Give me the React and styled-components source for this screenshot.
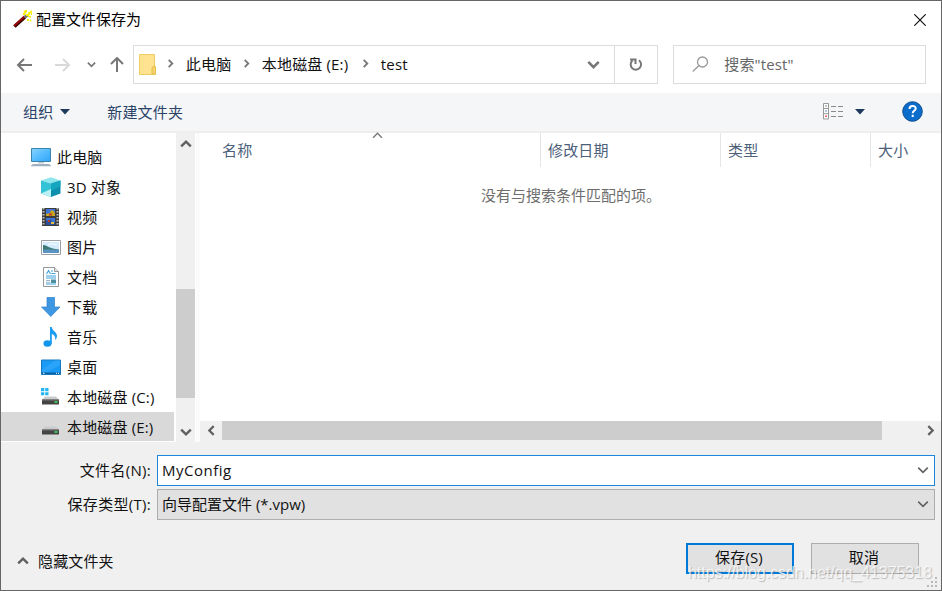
import React from 'react';
import styled, { createGlobalStyle } from 'styled-components';

const GlobalStyle = createGlobalStyle`
  * { box-sizing: border-box; }
  body { margin: 0; overflow: hidden; background: #fff; }
  button, input { font: inherit; color: inherit; letter-spacing: inherit; }
`;

const Window = styled.div`
  position: relative;
  display: flex;
  flex-direction: column;
  width: 942px;
  height: 591px;
  border: 1px solid #666;
  background: #fff;
  color: #111;
  font: 15px/20px 'Open Sans', 'Noto Sans CJK SC', sans-serif;
  letter-spacing: 0.15px;
  white-space: nowrap;
  overflow: hidden;
`;

const Icon = styled.svg`
  display: block;
  flex: none;
  width: ${(p) => p.$w}px;
  height: ${(p) => p.$h}px;
`;

const TitleBar = styled.header`
  display: flex;
  align-items: center;
  height: 37px;
  flex: none;
  padding: 0 15px 0 11px;
`;

const Title = styled.h1`
  flex: 1;
  margin: 0 0 0 4px;
  padding-bottom: 1px;
  font: inherit;
  letter-spacing: 0;
  color: #000;
`;

const NavBar = styled.nav`
  display: flex;
  align-items: center;
  height: 39px;
  flex: none;
  margin-top: 7px;
  padding: 0 15px 0 15px;
`;

const NavButtons = styled.div`
  display: flex;
  align-items: center;
  width: 117px;
`;

const NavGap = styled.span`
  width: ${(p) => p.$w}px;
`;

const AddressBar = styled.div`
  display: flex;
  align-items: center;
  width: 526px;
  height: 39px;
  border: 1px solid #dcdcdc;
  padding-left: 5px;
`;

const Crumb = styled.span`
  width: ${(p) => p.$w}px;
  padding-left: ${(p) => p.$pad || 0}px;
  padding-bottom: 2px;
`;

const AddressDrop = styled.div`
  display: flex;
  align-items: center;
  justify-content: center;
  align-self: stretch;
  width: 42px;
  margin-left: auto;
  border-right: 1px solid #dcdcdc;
`;

const Refresh = styled.div`
  display: flex;
  align-items: center;
  justify-content: center;
  width: 42px;
`;

const Search = styled.div`
  display: flex;
  align-items: center;
  width: 253px;
  height: 39px;
  margin-left: 15px;
  padding: 0 0 1px 18px;
  gap: 15px;
  border: 1px solid #dcdcdc;
  color: #666;
`;

const Toolbar = styled.div`
  display: flex;
  align-items: center;
  height: 40px;
  flex: none;
  margin-top: 9px;
  padding: 0 18px 1px 22px;
  border-bottom: 2px solid #eee;
  background: #f4f6f8;
  color: #2a4367;
`;

const ToolItem = styled.span`
  display: flex;
  align-items: center;
  gap: 7px;
  margin-right: ${(p) => p.$mr}px;
`;

const Spacer = styled.span`
  flex: 1;
`;

const Main = styled.main`
  display: flex;
  height: 309px;
  flex: none;
`;

const Tree = styled.ul`
  width: 173px;
  margin: 0;
  padding: 9px 0 0;
  list-style: none;
`;

const TreeRow = styled.li`
  display: flex;
  align-items: center;
  height: ${(p) => (p.$selected ? 29 : 30)}px;
  padding-left: ${(p) => (p.$root ? 29 : 39)}px;
  gap: 6px;
  background: ${(p) => (p.$selected ? '#d9d9d9' : 'transparent')};
`;

const VScroll = styled.div`
  display: flex;
  flex-direction: column;
  align-items: center;
  justify-content: space-between;
  width: 19px;
  margin-left: 2px;
  padding: 5px 0 4px;
  background: #f0f0f0;
`;

const VThumb = styled.span`
  width: 19px;
  height: 109px;
  margin-top: 111px;
  background: #cdcdcd;
`;

const ListPane = styled.section`
  flex: 1;
  display: flex;
  flex-direction: column;
  margin-left: 1px;
  border-left: 4px solid #fbfbfb;
`;

const Columns = styled.div`
  display: flex;
  height: 34px;
  color: #4c607a;
`;

const Column = styled.div`
  position: relative;
  display: flex;
  align-items: center;
  width: ${(p) => p.$w}px;
  padding-left: ${(p) => p.$pad}px;
  padding-bottom: 1px;
  border-right: ${(p) => (p.$last ? 'none' : '1px solid #e5e5e5')};
`;

const SortMark = styled.span`
  position: absolute;
  left: 172px;
  top: -3px;
`;

const Empty = styled.p`
  flex: 1;
  margin: 0;
  padding: 18px 0 0 281px;
  letter-spacing: 0;
  color: #6d6d6d;
`;

const HScroll = styled.div`
  display: flex;
  align-items: center;
  height: 21px;
  padding: 0 5px 2px 6px;
  background: #f0f0f0;
`;

const HThumb = styled.span`
  width: 660px;
  height: 19px;
  margin: 0 auto 0 5px;
  background: #cdcdcd;
`;

const Footer = styled.footer`
  flex: 1;
  padding: 13px 6px 0 0;
  background: #f0f0f0;
`;

const Field = styled.label`
  display: flex;
  align-items: center;
  height: 31px;
  margin-bottom: 3px;
`;

const FieldLabel = styled.span`
  width: 156px;
  padding: 0 6px 1px 0;
  text-align: right;
  letter-spacing: 0.3px;
`;

const FieldBox = styled.span`
  flex: 1;
  display: flex;
  align-items: center;
  justify-content: space-between;
  height: 31px;
  padding: 0 5px 2px 4px;
  border: 1px solid ${(p) => (p.$active ? '#1c86dc' : '#adadad')};
  background: ${(p) => (p.$active ? '#fff' : '#e1e1e1')};
  letter-spacing: ${(p) => (p.$active ? 0.5 : 0)}px;
`;

const Actions = styled.div`
  display: flex;
  align-items: center;
  height: 31px;
  margin-top: 23px;
  padding: 0 16px 0 16px;
`;

const HideFolders = styled.span`
  flex: 1;
  display: flex;
  align-items: center;
  gap: 9px;
  padding-top: 5px;
`;

const Button = styled.button`
  width: 108px;
  height: 31px;
  margin-left: ${(p) => (p.$primary ? 0 : 17)}px;
  padding: 0 2px 3px 0;
  border: ${(p) => (p.$primary ? '2px solid #0078d7' : '1px solid #adadad')};
  background: #e1e1e1;
`;

const Watermark = styled.span`
  position: absolute;
  left: 687px;
  top: 561px;
  font: 16px/22px 'Liberation Sans', sans-serif;
  letter-spacing: -0.05px;
  color: rgba(255, 255, 255, 0.75);
  text-shadow: 1px 1px 1px rgba(120, 120, 120, 0.45);
`;

const Grip = styled.span`
  position: absolute;
  right: 3px;
  bottom: 2px;
`;

const chevronPaths = {
  down: 'M1 3 L5 7 L9 3',
  up: 'M1 7 L5 3 L9 7',
  right: 'M3 1 L7 5 L3 9',
  left: 'M7 1 L3 5 L7 9',
};

const Chevron = ({ dir, size = 12, color = '#606060', weight = 2 }) => (
  <Icon $w={size} $h={size} viewBox="0 0 10 10" fill="none" stroke={color} strokeWidth={weight}>
    <path d={chevronPaths[dir]} />
  </Icon>
);

const Arrow = ({ rotate = 0, color = '#777' }) => (
  <Icon $w={18} $h={16} viewBox="0 0 18 16" fill="none" stroke={color} strokeWidth="2">
    <g transform={`rotate(${rotate} 9 8)`}>
      <path d="M16 8H2.5M8 2 2 8l6 6" />
    </g>
  </Icon>
);

const Caret = () => (
  <Icon $w={10} $h={6} viewBox="0 0 10 6">
    <path d="M0 0h10L5 5.5z" fill="#1e395b" />
  </Icon>
);

const Wand = () => (
  <Icon $w={20} $h={20} viewBox="0 0 20 20">
    <path d="M2.5 16.5 13 7" stroke="#300" strokeWidth="3.4" />
    <path d="M2 16 12.5 6.5" stroke="#a00808" strokeWidth="1.8" />
    <path d="M12.5 7.5l3-2.5" stroke="#777" strokeWidth="3" />
    <path
      d="M14 5h3M17 2v3M12 1l2 2M19 7l-3-1M20 1l-2 2M16 9v2M11 4h2M18 10l1 1M14 0v2M20 4h-1"
      stroke="#f8f000"
      strokeWidth="1.8"
    />
  </Icon>
);

const Folder = () => (
  <Icon $w={17} $h={21} viewBox="0 0 17 21">
    <path d="M.5.5h15v12h1v8h-16z" fill="#ffe390" stroke="#efcc62" />
    <path d="M13 20v-6l1.500-2 2 1v7z" fill="#f6d36c" stroke="#e5bd4d" />
  </Icon>
);

const PcIcon = () => (
  <Icon $w={21} $h={20} viewBox="0 0 21 20">
    <defs>
      <linearGradient id="screen" x1="0" y1="0" x2="1" y2="1">
        <stop offset="0" stopColor="#8bd4ff" />
        <stop offset=".5" stopColor="#55bcff" />
        <stop offset="1" stopColor="#2fa5f7" />
      </linearGradient>
    </defs>
    <path d="M1.500 1.500h19v13h-19z" fill="url(#screen)" stroke="#3b85ad" />
    <path d="M8 15h6v1.500H8z" fill="#c4ccd2" />
    <path d="M1 18.500 3 17h16l2 1.500v.8H1z" fill="#9fb0c2" />
  </Icon>
);

const CubeIcon = () => (
  <Icon $w={21} $h={20} viewBox="0 0 21 20">
    <path d="M1 3.500 11 .3l9.500 3.200L11 6.500z" fill="#8ee6ee" />
    <path d="M1 3.500 11 6.500V20L1 16.500z" fill="#34c3d6" />
    <path d="M1 16.500 11 12v8z" fill="#b9f1f4" />
    <path d="M11 6.500l9.500-3v13L11 20z" fill="#0d8fae" />
    <path d="M11 6.500l9.500-3V9L11 14z" fill="#15a6c0" />
  </Icon>
);

const VideoIcon = () => (
  <Icon $w={21} $h={20} viewBox="0 0 21 20">
    <path d="M2 1h17v18H2z" fill="#3c3c3c" />
    <path d="M3.500 1v18M17.500 1v18" stroke="#bbb" strokeWidth="2" strokeDasharray="1.500 1.500" />
    <path d="M6 2h9v7H6zM6 11h9v7H6z" fill="#3f74d8" />
    <path d="M6 7l4-1 1-3 3 1 1 3v2H6z" fill="#c9a51f" />
    <path d="M6 13l3 1 2-2 1 3 3 1v2H6z" fill="#2c4f9c" />
    <path d="M9 6.500h3v2H9zM8 13h2v2H8z" fill="#c33b23" />
    <path d="M11 15h3v2h-3z" fill="#e4c03a" />
  </Icon>
);

const PictureIcon = () => (
  <Icon $w={21} $h={20} viewBox="0 0 21 20">
    <path d="M1.500 3.500h19v14h-19z" fill="#fff" stroke="#9a9fa5" />
    <path d="M3 5h16v11H3z" fill="#d3ebfc" />
    <path d="M3 8c4 0 6 3.500 16 4.500v1H3z" fill="#3d7a75" />
    <path d="M3 13c6-1 10 0 16-.5V16H3z" fill="#5b94c4" />
    <path d="M8 8c3-2 6-1 9 0" fill="none" stroke="#fff" />
  </Icon>
);

const DocIcon = () => (
  <Icon $w={21} $h={20} viewBox="0 0 21 20">
    <path d="M3.500.5h11l4 4v15h-15z" fill="#fff" stroke="#93989c" />
    <path d="M14.500.5v4h4" fill="#e8e8e8" stroke="#93989c" />
    <path d="M6.500 7l2-3.500 2 3.500M11 4h2M11.500 6.500h4M6 9h10M6 11h10M6 17h10" fill="none" stroke="#3fa2dc" strokeWidth="1.100" />
    <path d="M6 13.500h4M6 15.300h4" stroke="#95b8cf" />
    <path d="M11 12.500h5v3.500h-5z" fill="#4c8f9e" />
  </Icon>
);

const DownloadIcon = () => (
  <Icon $w={21} $h={20} viewBox="0 0 21 20">
    <path d="M7 .5h7.500V10h5.500L10.800 19.500 1.500 10H7z" fill="#3e97e3" stroke="#2f7fc8" strokeWidth=".7" />
  </Icon>
);

const MusicIcon = () => (
  <Icon $w={21} $h={20} viewBox="0 0 21 20">
    <ellipse cx="7.500" cy="16.500" rx="4" ry="3.200" fill="#1296ec" />
    <path d="M10 0h1.800c.2 4 5.200 4.800 5.200 9 0 2-1 3-1.800 4 .4-3.500-1-5-3.400-6v10H10z" fill="#1a9df3" />
  </Icon>
);

const DesktopIcon = () => (
  <Icon $w={21} $h={20} viewBox="0 0 21 20">
    <path d="M1.500 3h19v14.500h-19z" fill="#189af5" stroke="#1679c0" />
    <path d="M2 12.500 15 3.500h5V8L6 15.500H2z" fill="#2ba3f8" />
    <path d="M2 15.500h18V17H2z" fill="#0c5f9f" />
    <path d="M3 16.300h1.500M16 16.300h1M18 16.300h1" stroke="#fff" />
  </Icon>
);

const DriveIcon = ({ system }) => (
  <Icon $w={21} $h={20} viewBox="0 0 21 20">
    {system && (
      <path d="M1 1h3.300v3.200H1zM5.200 1h3.300v3.200H5.200zM1 5.200h3.300v3H1zM5.200 5.200h3.300v3H5.200z" fill="#22b7ee" />
    )}
    <path d="M5 9.500h11l3 3.500H2z" fill="#c9cbcd" />
    <path d="M2 12.500h17v5H2z" fill="#444" />
    <path d="M2 12.500h17v1H2z" fill="#777" />
    <path d="M14.500 15h3" stroke="#43e05e" strokeWidth="1.600" />
  </Icon>
);

const treeItems = [
  { label: '此电脑', icon: <PcIcon />, root: true },
  { label: '3D 对象', icon: <CubeIcon /> },
  { label: '视频', icon: <VideoIcon /> },
  { label: '图片', icon: <PictureIcon /> },
  { label: '文档', icon: <DocIcon /> },
  { label: '下载', icon: <DownloadIcon /> },
  { label: '音乐', icon: <MusicIcon /> },
  { label: '桌面', icon: <DesktopIcon /> },
  { label: '本地磁盘 (C:)', icon: <DriveIcon system /> },
  { label: '本地磁盘 (E:)', icon: <DriveIcon />, selected: true },
];

export default function App() {
  return (
    <>
      <GlobalStyle />
      <Window>
        <TitleBar>
          <Wand />
          <Title>配置文件保存为</Title>
          <Icon $w={12} $h={12} viewBox="0 0 12 12" stroke="#111" strokeWidth="1.200">
            <path d="M.3.3l11.400 11.400M11.700.3.3 11.700" />
          </Icon>
        </TitleBar>

        <NavBar>
          <NavButtons>
            <Arrow />
            <NavGap $w={19} />
            <Arrow rotate={180} color="#d9d9d9" />
            <NavGap $w={16} />
            <Chevron dir="down" size={9} color="#777" />
            <NavGap $w={12} />
            <Arrow rotate={90} />
          </NavButtons>
          <AddressBar>
            <Folder />
            <Crumb $w={30} $pad={10}>
              <Chevron dir="right" size={9} color="#777" />
            </Crumb>
            <Crumb $w={56}>此电脑</Crumb>
            <Crumb $w={20}>
              <Chevron dir="right" size={9} color="#777" />
            </Crumb>
            <Crumb $w={99}>本地磁盘 (E:)</Crumb>
            <Crumb $w={20}>
              <Chevron dir="right" size={9} color="#777" />
            </Crumb>
            <Crumb>test</Crumb>
            <AddressDrop>
              <Chevron dir="down" size={13} color="#777" />
            </AddressDrop>
            <Refresh>
              <Icon $w={14} $h={15} viewBox="0 0 14 15" fill="none" stroke="#777" strokeWidth="2">
                <path d="M10 3.300A5.200 5.200 0 1 1 3.500 3.500M6.500 7V2.500H1" />
              </Icon>
            </Refresh>
          </AddressBar>
          <Search>
            <Icon $w={17} $h={17} viewBox="0 0 17 17" fill="none" stroke="#999" strokeWidth="1.300">
              <circle cx="10.500" cy="6" r="5" />
              <path d="M7 9.500.8 15.500" />
            </Icon>
            搜索"test"
          </Search>
        </NavBar>

        <Toolbar>
          <ToolItem $mr={37}>
            组织
            <Caret />
          </ToolItem>
          <ToolItem $mr={0}>新建文件夹</ToolItem>
          <Spacer />
          <ToolItem $mr={11}>
            <Icon $w={21} $h={17} viewBox="0 0 21 17" fill="none" stroke="#999">
              <path d="M.5.5h5v15.500h-5zM.5 5.500h5M.5 10.700h5" fill="#fff" />
              <path d="M8 3.500h5M15 3.500h5M8 8.500h5M15 8.500h5M8 13.500h5M15 13.500h5" stroke="#8a8a8a" />
              <path d="M2.300 3h1.500" stroke="#567" />
              <path d="M2.300 8h1.500" stroke="#27c" />
              <path d="M2.300 13.300h1.500" stroke="#e33" strokeWidth="1.500" />
            </Icon>
          </ToolItem>
          <ToolItem $mr={37}>
            <Caret />
          </ToolItem>
          <Icon $w={21} $h={21} viewBox="0 0 21 21">
            <circle cx="10.500" cy="10.500" r="9.800" fill="#0a6ccb" stroke="#10508e" />
            <path
              d="M7.500 8c0-4 6.200-4 6.200-.5 0 2.300-3 2.300-3 4.700M10.700 13.700v2.300"
              fill="none"
              stroke="#fff"
              strokeWidth="2"
            />
          </Icon>
        </Toolbar>

        <Main>
          <Tree>
            {treeItems.map((item) => (
              <TreeRow key={item.label} $root={item.root} $selected={item.selected}>
                {item.icon}
                {item.label}
              </TreeRow>
            ))}
          </Tree>
          <VScroll>
            <Chevron dir="up" />
            <VThumb />
            <Chevron dir="down" />
          </VScroll>
          <ListPane>
            <Columns>
              <Column $w={341} $pad={22}>
                名称
                <SortMark>
                  <Chevron dir="up" size={11} color="#777" weight={1.2} />
                </SortMark>
              </Column>
              <Column $w={180} $pad={7}>修改日期</Column>
              <Column $w={150} $pad={7}>类型</Column>
              <Column $w={69} $pad={7} $last>大小</Column>
            </Columns>
            <Empty>没有与搜索条件匹配的项。</Empty>
            <HScroll>
              <Chevron dir="left" size={11} />
              <HThumb />
              <Chevron dir="right" size={11} />
            </HScroll>
          </ListPane>
        </Main>

        <Footer>
          <Field>
            <FieldLabel>文件名(N):</FieldLabel>
            <FieldBox $active>
              MyConfig
              <Chevron dir="down" size={12} weight={1.3} />
            </FieldBox>
          </Field>
          <Field>
            <FieldLabel>保存类型(T):</FieldLabel>
            <FieldBox>
              向导配置文件 (*.vpw)
              <Chevron dir="down" size={12} weight={1.3} />
            </FieldBox>
          </Field>
          <Actions>
            <HideFolders>
              <Chevron dir="up" />
              隐藏文件夹
            </HideFolders>
            <Button $primary>保存(S)</Button>
            <Button>取消</Button>
          </Actions>
        </Footer>
        <Watermark>https://blog.csdn.net/qq_41375318</Watermark>
        <Grip>
          <Icon $w={11} $h={11} viewBox="0 0 11 11" fill="#b8b8b8">
            <path d="M8 0h2v2H8zM4 4h2v2H4zM8 4h2v2H8zM0 8h2v2H0zM4 8h2v2H4zM8 8h2v2H8z" />
          </Icon>
        </Grip>
      </Window>
    </>
  );
}
